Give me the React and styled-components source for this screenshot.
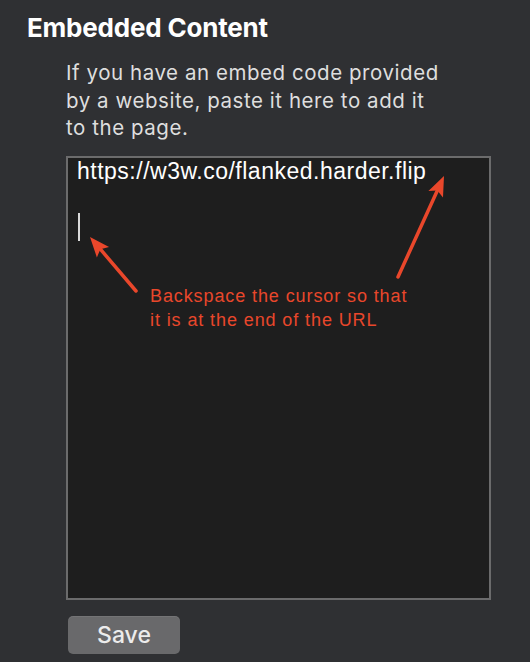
import React from "react";
import styled, { createGlobalStyle } from "styled-components";

const GlobalStyle = createGlobalStyle`
  html, body {
    margin: 0;
    padding: 0;
    background: #2f3033;
  }
  body {
    font-family: Inter, "Noto Sans", sans-serif;
  }
`;

const RED = "#e9472b";

const Panel = styled.div`
  width: 530px;
  height: 662px;
  box-sizing: border-box;
  padding: 12px 0 0 27px;
  background: #2f3033;
  display: flex;
  flex-direction: column;
  overflow: hidden;
`;

const Title = styled.h2`
  margin: 0;
  font-family: Inter, sans-serif;
  font-size: 26px;
  line-height: 32px;
  font-weight: 700;
  color: #ffffff;
  letter-spacing: -0.2px;
`;

const Body = styled.div`
  margin: 15px 0 0 39px;
  display: flex;
  flex-direction: column;
  align-items: flex-start;
`;

const Description = styled.p`
  margin: 0;
  width: 376px;
  font-family: Inter, sans-serif;
  font-size: 20.5px;
  line-height: 27.5px;
  letter-spacing: 0.55px;
  color: #dedede;
`;

const Field = styled.div`
  position: relative;
  margin-top: 14px;
  width: 425px;
  height: 444px;
  box-sizing: border-box;
  border: 2px solid #6b6b6c;
  background: #1e1e1e;
  padding: 0 9px;
  font-family: "Liberation Sans", Arial, sans-serif;
  font-size: 23px;
  line-height: 27.5px;
  letter-spacing: 0.5px;
  color: #ffffff;
`;

const Line = styled.div`
  height: 27.5px;
  white-space: pre;
`;

const Caret = styled.span`
  display: inline-block;
  width: 1.5px;
  height: 28px;
  margin-left: 1px;
  background: #d9d9d9;
  vertical-align: top;
`;

const Annotation = styled.svg`
  position: absolute;
  left: 0;
  top: 0;
  width: 100%;
  height: 100%;
  overflow: visible;
  pointer-events: none;
`;

const Note = styled.div`
  position: absolute;
  left: ${(p) => p.$x}px;
  top: ${(p) => p.$y}px;
  font-family: "Liberation Sans", Arial, sans-serif;
  font-size: 18px;
  line-height: 24.3px;
  letter-spacing: 0.9px;
  color: ${RED};
  white-space: pre;
`;

const SaveButton = styled.button`
  margin: 16px 0 0 2px;
  width: 112px;
  height: 38px;
  border: none;
  border-radius: 5px;
  background: #69696b;
  color: #ececec;
  font-family: Inter, sans-serif;
  font-size: 23px;
  font-weight: 500;
  padding: 0;
  box-shadow: inset 0 1px 0 rgba(255, 255, 255, 0.08);
`;

// arrow drawn from tail to tip with a notched head
const Arrow = ({ from, to }) => {
  const dx = to[0] - from[0];
  const dy = to[1] - from[1];
  const len = Math.hypot(dx, dy);
  const ux = dx / len;
  const uy = dy / len;
  const px = -uy;
  const py = ux;
  const head = 20;
  const half = 8;
  const bx = to[0] - ux * head;
  const by = to[1] - uy * head;
  const nx = to[0] - ux * (head - 4);
  const ny = to[1] - uy * (head - 4);
  const pts = [
    [to[0], to[1]],
    [bx + px * half, by + py * half],
    [nx, ny],
    [bx - px * half, by - py * half],
  ]
    .map((p) => p.join(","))
    .join(" ");
  return (
    <g>
      <line
        x1={from[0]}
        y1={from[1]}
        x2={nx}
        y2={ny}
        stroke={RED}
        strokeWidth="3.5"
        strokeLinecap="round"
      />
      <polygon points={pts} fill={RED} />
    </g>
  );
};

const App = () => {
  return (
    <>
      <GlobalStyle />
      <Panel>
        <Title>Embedded Content</Title>
        <Body>
          <Description>
            If you have an embed code provided by a website, paste it here to
            add it to the page.
          </Description>
          <Field>
            <Line>https://w3w.co/flanked.harder.flip</Line>
            <Line> </Line>
            <Line>
              <Caret />
            </Line>
            <Annotation>
              <Arrow from={[68, 133]} to={[22, 79]} />
              <Arrow from={[330, 119]} to={[376, 18]} />
            </Annotation>
            <Note $x={82} $y={126}>
              {"Backspace the cursor so that\nit is at the end of the URL"}
            </Note>
          </Field>
          <SaveButton>Save</SaveButton>
        </Body>
      </Panel>
    </>
  );
};

export default App;
